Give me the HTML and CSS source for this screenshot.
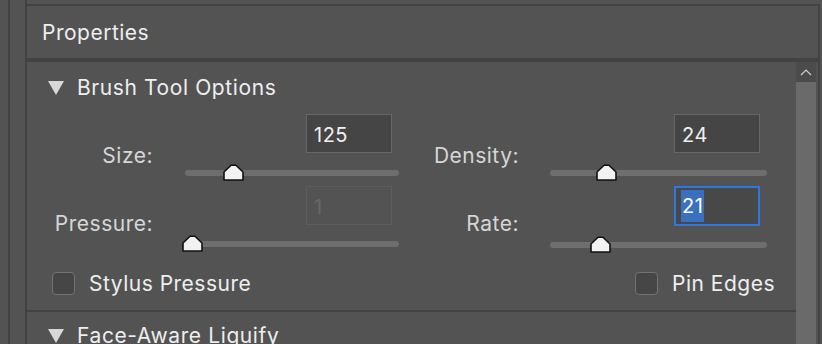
FILE: index.html
```html
<!DOCTYPE html>
<html lang="en">
<head>
  <meta charset="UTF-8" />
  <title>Properties</title>
  <link rel="stylesheet" href="styles.css">
</head>
<body>
  <div class="app">
    <div class="dock-edge"></div>
    <div class="dock-gap"></div>

    <div class="panel">
      <div class="panel-title">Properties</div>

      <div class="panel-body">
        <div class="content">
          <div class="section-head">
            <span class="twisty"></span>
            <span>Brush Tool Options</span>
          </div>

          <div class="controls">
            <div class="control left">
              <div class="label">Size:</div>
              <div class="field">
                <input class="num" type="text" value="125" />
                <div class="track"><span class="thumb" style="left: 19%"></span></div>
              </div>
            </div>
            <div class="control right">
              <div class="label">Density:</div>
              <div class="field">
                <input class="num" type="text" value="24" />
                <div class="track"><span class="thumb" style="left: 22.6%"></span></div>
              </div>
            </div>
            <div class="control left lower">
              <div class="label">Pressure:</div>
              <div class="field">
                <input class="num" type="text" value="1" disabled />
                <div class="track"><span class="thumb" style="left: 0%"></span></div>
              </div>
            </div>
            <div class="control right lower">
              <div class="label">Rate:</div>
              <div class="field">
                <div class="num focused"><span class="sel">21</span></div>
                <div class="track"><span class="thumb" style="left: 20%"></span></div>
              </div>
            </div>
          </div>

          <div class="checks">
            <label class="check"><span class="box"></span>Stylus Pressure</label>
            <label class="check"><span class="box"></span>Pin Edges</label>
          </div>

          <div class="section-head next">
            <span class="twisty"></span>
            <span>Face-Aware Liquify</span>
          </div>
        </div>

        <div class="scrollbar">
          <div class="scroll-up">
            <svg width="12" height="8" viewBox="0 0 12 8"><path d="M1 7 L6 2 L11 7" fill="none" stroke="#d0d0d0" stroke-width="1.2"/></svg>
          </div>
          <div class="scroll-thumb"></div>
        </div>
      </div>
    </div>
  </div>
</body>
</html>
```

FILE: styles.css
```css
html, body {
  margin: 0;
  padding: 0;
  height: 100%;
  background: #535353;
  font-family: 'Inter', 'Noto Sans', sans-serif;
  color: #eeeeee;
  overflow: hidden;
}
.app {
  display: flex;
  height: 344px;
}
.dock-edge {
  width: 8px;
  border-right: 2px solid #424242;
}
.dock-gap {
  width: 15px;
  border-right: 2px solid #424242;
}
.panel {
  flex: 1;
  margin-top: 4px;
  border-top: 2px solid #424242;
  border-right: 2px solid #424242;
  margin-right: 2px;
  display: flex;
  flex-direction: column;
}
.panel-title {
  height: 52px;
  padding-left: 15px;
  font-size: 21px;
  letter-spacing: 0.5px;
  line-height: 54px;
  border-bottom: 4px solid #424242;
}
.panel-body {
  flex: 1;
  display: flex;
}
.content {
  flex: 1;
}
.section-head {
  box-sizing: border-box;
  height: 48px;
  display: flex;
  align-items: center;
  padding: 3px 0 0 21px;
  font-size: 21px;
  letter-spacing: 0.6px;
  gap: 13px;
}
.twisty {
  width: 0;
  height: 0;
  border-left: 8px solid transparent;
  border-right: 8px solid transparent;
  border-top: 14px solid #d8d8d8;
}
.controls {
  display: grid;
  grid-template-columns: 372px 368px;
  margin-top: 4px;
}
.control {
  display: grid;
  grid-template-columns: 126px 214px;
  column-gap: 32px;
  height: 72px;
}
.control.right {
  grid-template-columns: 120px 217px;
  column-gap: 31px;
}
.label {
  text-align: right;
  font-size: 21px;
  letter-spacing: 0.5px;
  color: #d6d6d6;
  padding-top: 29px;
}
.control.lower .label {
  padding-top: 25px;
}
.field {
  display: flex;
  flex-direction: column;
}
.num {
  align-self: flex-end;
  box-sizing: border-box;
  width: 86px;
  height: 39px;
  margin-right: 7px;
  padding: 2px 7px 0;
  background: #454545;
  border: 1px solid #676767;
  color: #f0f0f0;
  font-family: inherit;
  font-size: 20px;
  letter-spacing: 0.5px;
  outline: none;
}
.num:disabled {
  background: #535353;
  border-color: #5d5d5d;
  color: #676767;
}
.num.focused {
  height: 40px;
  border: 2px solid #2d78de;
  background: #484848;
  display: flex;
  align-items: center;
  padding: 0 5px;
}
.sel {
  background: #3a70c0;
  color: #ffffff;
  padding: 2px 1px;
  line-height: 28px;
}
.track {
  position: relative;
  margin-top: 17px;
  height: 6px;
  border-radius: 3px;
  background: #6e6e6e;
}
.lower .track {
  margin-top: 16px;
}
.thumb {
  position: absolute;
  top: -6px;
  width: 21px;
  height: 17px;
  margin-left: -3px;
  background: url("data:image/svg+xml,%3Csvg xmlns='http://www.w3.org/2000/svg' width='21' height='17'%3E%3Cpolygon points='1,16 1,8 8,1.2 13,1.2 20,8 20,16' fill='%23f2f2f2' stroke='%23111' stroke-width='1.6' stroke-linejoin='round'/%3E%3C/svg%3E") no-repeat;
}
.checks {
  box-sizing: border-box;
  display: flex;
  align-items: center;
  justify-content: space-between;
  padding: 0 21px 2px 25px;
  height: 54px;
  border-bottom: 2px solid #424242;
}
.check {
  display: flex;
  align-items: center;
  gap: 14px;
  font-size: 21px;
  letter-spacing: 0.5px;
}
.box {
  width: 21px;
  height: 21px;
  border: 1px solid #737373;
  border-radius: 4px;
  background: #464646;
}
.section-head.next {
  height: 44px;
}
.scrollbar {
  width: 20px;
  margin-right: 2px;
  display: flex;
  flex-direction: column;
}
.scroll-up {
  height: 20px;
  background: #4b4b4b;
  display: flex;
  align-items: center;
  justify-content: center;
}
.scroll-thumb {
  flex: 1;
  background: #6a6a6a;
}
```
